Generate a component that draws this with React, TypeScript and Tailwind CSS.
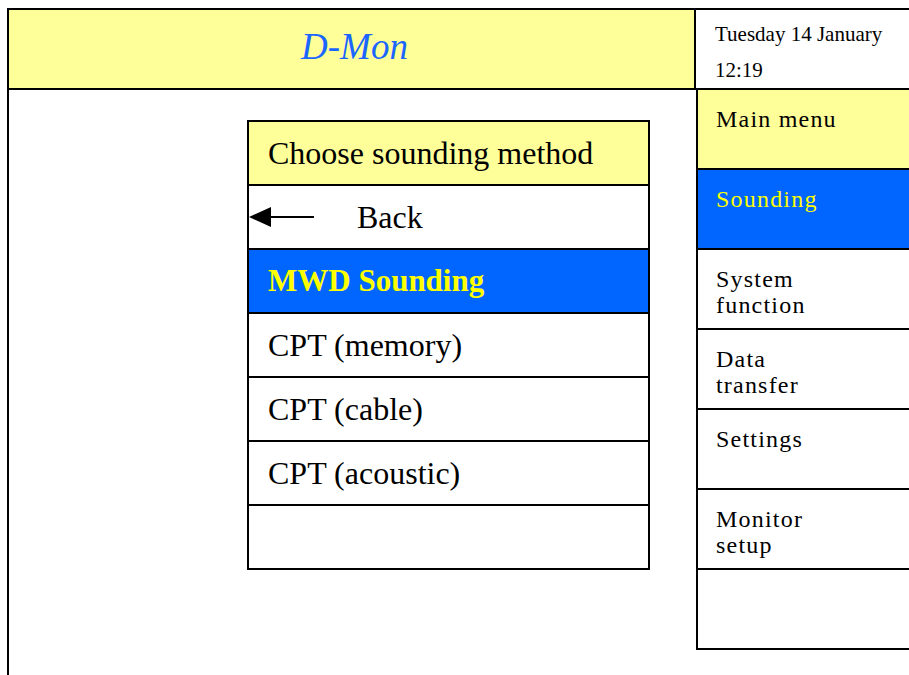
import React from "react";

const serif = { fontFamily: '"Liberation Serif", "Times New Roman", serif' };

const sideItems: { label: string[]; tone?: "yellow" | "blue" }[] = [
  { label: ["Main menu"], tone: "yellow" },
  { label: ["Sounding"], tone: "blue" },
  { label: ["System", "function"] },
  { label: ["Data", "transfer"] },
  { label: ["Settings"] },
  { label: ["Monitor", "setup"] },
  { label: [] },
];

const BackArrow = () => (
  <svg width="66" height="24" viewBox="0 0 66 24" className="shrink-0">
    <polygon points="0,12 22,2 22,22" fill="#000" />
    <line x1="20" y1="12" x2="65" y2="12" stroke="#000" strokeWidth="2" />
  </svg>
);

const App = () => {
  return (
    <div
      className="w-[909px] h-[675px] overflow-hidden bg-white pt-[8px] pl-[7px] flex flex-col text-black"
      style={serif}
    >
      {/* title bar */}
      <div className="flex h-[82px] w-[920px] shrink-0 border-2 border-r-0 border-black">
        <div className="w-[687px] border-r-2 border-black bg-[#ffff99] flex items-center justify-center pb-[5px] pl-[6px]">
          <span className="text-[37px] italic text-[#1a66ff] leading-none">D-Mon</span>
        </div>
        <div className="flex-1 bg-white pt-[6px] pl-[19px] text-[21px] leading-[36px]">
          <div>Tuesday 14 January</div>
          <div>12:19</div>
        </div>
      </div>

      <div className="flex flex-1">
        {/* main area */}
        <div className="w-[689px] shrink-0 border-l-2 border-black">
          <div className="ml-[238px] mt-[30px] w-[403px] border-2 border-b-0 border-black">
            <div className="h-[64px] border-b-2 border-black bg-[#ffff99] flex items-center pl-[19px] text-[32px]">
              Choose sounding method
            </div>
            <div className="h-[64px] border-b-2 border-black flex items-center text-[32px]">
              <BackArrow />
              <span className="ml-[42px]">Back</span>
            </div>
            <div className="h-[64px] border-b-2 border-black bg-[#0066ff] flex items-center pl-[19px] text-[31px] font-bold text-[#ffff00]">
              MWD Sounding
            </div>
            <div className="h-[64px] border-b-2 border-black flex items-center pl-[19px] text-[32px]">
              CPT (memory)
            </div>
            <div className="h-[64px] border-b-2 border-black flex items-center pl-[19px] text-[32px]">
              CPT (cable)
            </div>
            <div className="h-[64px] border-b-2 border-black flex items-center pl-[19px] text-[32px]">
              CPT (acoustic)
            </div>
            <div className="h-[64px] border-b-2 border-black" />
          </div>
        </div>

        {/* side menu */}
        <div className="w-[230px] shrink-0 self-start border-l-2 border-black">
          {sideItems.map((item, i) => (
            <div
              key={i}
              className={
                "h-[80px] border-b-2 border-black pt-[16px] pl-[18px] text-[24px] leading-[26px] tracking-[1.2px] " +
                (item.tone === "yellow"
                  ? "bg-[#ffff99] text-black"
                  : item.tone === "blue"
                  ? "bg-[#0066ff] text-[#ffff00]"
                  : "bg-white text-black")
              }
            >
              {item.label.map((l) => (
                <div key={l}>{l}</div>
              ))}
            </div>
          ))}
        </div>
      </div>
    </div>
  );
};

export default App;
